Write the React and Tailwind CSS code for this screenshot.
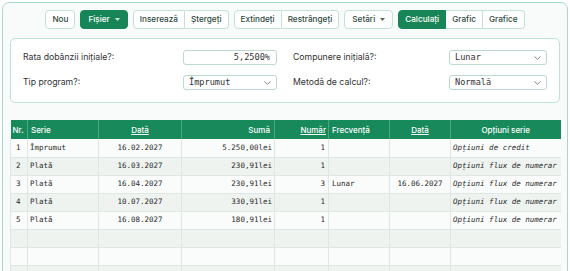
import React from "react";

const sans = { fontFamily: "Inter, 'Noto Sans', sans-serif" };
const mono = { fontFamily: "'DejaVu Sans Mono', 'Liberation Mono', monospace" };

function Caret({ color = "currentColor" }) {
  return (
    <svg width="5" height="3" viewBox="0 0 5 3" className="ml-[5px]">
      <path d="M0 0 L5 0 L2.5 3 Z" fill={color} />
    </svg>
  );
}

function Chevron() {
  return (
    <svg width="7" height="4" viewBox="0 0 7 4" fill="none">
      <path d="M0.5 0.5 L3.5 3.3 L6.5 0.5" stroke="#777" strokeWidth="0.9" />
    </svg>
  );
}

const base =
  "h-[19px] flex items-center px-[6px] text-[8.2px] font-medium border";
const white = "bg-white text-[#2f4a40] border-[#c3e2d6]";
const green = "bg-[#178558] text-white border-[#178558]";

function Btn({ children, green: g, className = "" }) {
  return <div className={`${base} ${g ? green : white} ${className}`}>{children}</div>;
}

const rows = [
  ["1", "Împrumut", "16.02.2027", "5.250,00lei", "1", "", "", "Opțiuni de credit"],
  ["2", "Plată", "16.03.2027", "230,91lei", "1", "", "", "Opțiuni flux de numerar"],
  ["3", "Plată", "16.04.2027", "230,91lei", "3", "Lunar", "16.06.2027", "Opțiuni flux de numerar"],
  ["4", "Plată", "10.07.2027", "330,91lei", "1", "", "", "Opțiuni flux de numerar"],
  ["5", "Plată", "16.08.2027", "180,91lei", "1", "", "", "Opțiuni flux de numerar"],
  ["", "", "", "", "", "", "", ""],
  ["", "", "", "", "", "", "", ""],
  ["", "", "", "", "", "", "", ""],
];

const widths = ["w-[17px]", "w-[71px]", "w-[83px]", "w-[93px]", "w-[54px]", "w-[61px]", "w-[61px]", "w-[110px]"];
const bodyAlign = ["text-left pl-[5px]", "text-left pl-[2px]", "text-center", "text-right pr-[2px]", "text-right pr-[3px]", "text-left pl-[3px]", "text-center", "text-left pl-[2px] italic"];

const field =
  "h-[15px] rounded-[3px] border border-[#bcd9ce] flex items-center text-[8.6px] text-[#333]";

export default function App() {
  return (
    <div className="w-[570px] h-[271px] overflow-hidden bg-white" style={sans}>
      <div className="mx-[2px] mt-[2px] min-h-[300px] rounded-[7px] border border-[#a6dac8] bg-[#f8fbfa] px-[7px] pt-[7px]">
        {/* toolbar */}
        <div className="flex justify-center gap-[5px]">
          <Btn className="rounded-[4px]">Nou</Btn>
          <Btn green className="rounded-[4px] px-[7px]">
            Fișier
            <Caret color="#cfe9dd" />
          </Btn>
          <div className="flex">
            <Btn className="rounded-l-[4px]">Inserează</Btn>
            <Btn className="rounded-r-[4px] border-l-0">Ștergeți</Btn>
          </div>
          <div className="flex">
            <Btn className="rounded-l-[4px]">Extindeți</Btn>
            <Btn className="rounded-r-[4px] border-l-0">Restrângeți</Btn>
          </div>
          <Btn className="rounded-[4px] px-[7px]">
            Setări
            <Caret color="#666" />
          </Btn>
          <div className="flex">
            <Btn green className="rounded-l-[4px]">Calculați</Btn>
            <Btn className="border-l-0">Grafic</Btn>
            <Btn className="rounded-r-[4px] border-l-0">Grafice</Btn>
          </div>
        </div>

        {/* settings panel */}
        <div className="mt-[9px] rounded-[5px] border border-[#bfe3d6] bg-white px-[12px] pt-[11px] pb-[12px] grid grid-cols-2 gap-x-[16px] gap-y-[10px] text-[8.7px] text-[#333]">
          <div className="flex items-center justify-between h-[15px]">
            <span>Rata dobânzii inițiale?:</span>
            <div className={`${field} w-[94px] justify-end pr-[6px]`} style={mono}>
              5,2500%
            </div>
          </div>
          <div className="flex items-center justify-between h-[15px]">
            <span>Compunere inițială?:</span>
            <div className={`${field} w-[98px] justify-between pl-[5px] pr-[5px]`} style={mono}>
              <span>Lunar</span>
              <Chevron />
            </div>
          </div>
          <div className="flex items-center justify-between h-[15px]">
            <span>Tip program?:</span>
            <div className={`${field} w-[94px] justify-between pl-[5px] pr-[5px]`} style={mono}>
              <span>Împrumut</span>
              <Chevron />
            </div>
          </div>
          <div className="flex items-center justify-between h-[15px]">
            <span>Metodă de calcul?:</span>
            <div className={`${field} w-[98px] justify-between pl-[5px] pr-[5px]`} style={mono}>
              <span>Normală</span>
              <Chevron />
            </div>
          </div>
        </div>

        {/* table */}
        <table className="mt-[17px] w-[550px] table-fixed border-collapse">
          <colgroup>
            {widths.map((w, i) => (
              <col key={i} className={w} />
            ))}
          </colgroup>
          <thead>
            <tr className="h-[19px] bg-[#17895b] text-white text-[8px] font-medium">
              <th className="text-left pl-[2px] font-medium border-r border-[#4aa981]">Nr.</th>
              <th className="text-left pl-[3px] font-medium border-r border-[#4aa981]">Serie</th>
              <th className="text-center font-medium border-r border-[#4aa981]"><span className="underline">Dată</span></th>
              <th className="text-right pr-[4px] font-medium border-r border-[#4aa981]">Sumă</th>
              <th className="text-right pr-[2px] font-medium border-r border-[#4aa981]"><span className="underline">Număr</span></th>
              <th className="text-left pl-[3px] font-medium border-r border-[#4aa981]">Frecvență</th>
              <th className="text-center font-medium border-r border-[#4aa981]"><span className="underline">Dată</span></th>
              <th className="text-center font-medium">Opțiuni serie</th>
            </tr>
          </thead>
          <tbody>
            {rows.map((r, ri) => (
              <tr
                key={ri}
                className={`h-[18px] border-b border-[#dfe7e3] ${ri % 2 === 0 ? "bg-[#fafcfb]" : "bg-[#eef3f0]"}`}
              >
                {r.map((c, ci) => (
                  <td
                    key={ci}
                    className={`p-0 text-[7.5px] text-[#2a2a2a] whitespace-nowrap overflow-hidden ${bodyAlign[ci]} ${ci < 7 ? "border-r border-[#dfe7e3]" : ""} ${ci === 0 ? "border-l border-[#dfe7e3]" : ""}`}
                    style={mono}
                  >
                    {c}
                  </td>
                ))}
              </tr>
            ))}
          </tbody>
        </table>
      </div>
    </div>
  );
}
